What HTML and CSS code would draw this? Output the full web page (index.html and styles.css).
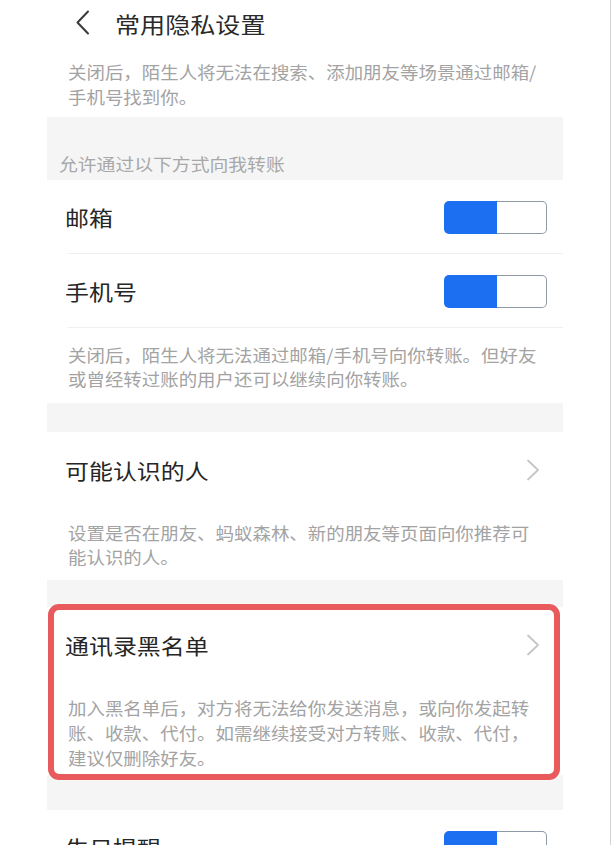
FILE: index.html
```html
<!DOCTYPE html>
<html lang="zh-CN">
<head>
<meta charset="utf-8">
<title>常用隐私设置</title>
<link rel="stylesheet" href="styles.css">
</head>
<body>
<div class="page">
  <div class="screen">
    <header class="header">
      <svg class="back" width="15" height="25" viewBox="0 0 15 25"><path d="M13 1.5 L2.5 12.5 L13 23.5" fill="none" stroke="#3a3a3a" stroke-width="2" stroke-linecap="round" stroke-linejoin="round"/></svg>
      <h1 class="title"><span class="wide">常用隐私设置</span></h1>
    </header>

    <p class="desc desc-top"><span class="wide-s">关闭后，陌生人将无法在搜索、添加朋友等场景通过邮箱/<br>手机号找到你。</span></p>

    <div class="group-label"><span class="wide">允许通过以下方式向我转账</span></div>

    <div class="row row-line">
      <span class="row-title wide">邮箱</span>
      <span class="toggle"><span class="toggle-on"></span><span class="toggle-off"></span></span>
    </div>
    <div class="row row-line">
      <span class="row-title wide">手机号</span>
      <span class="toggle"><span class="toggle-on"></span><span class="toggle-off"></span></span>
    </div>
    <p class="desc desc-pay"><span class="wide-s">关闭后，陌生人将无法通过邮箱/手机号向你转账。但好友<br>或曾经转过账的用户还可以继续向你转账。</span></p>

    <div class="gap gap-a"></div>

    <div class="row row-tall">
      <span class="row-title wide">可能认识的人</span>
      <svg class="chev" width="14" height="22" viewBox="0 0 14 22"><path d="M2 1.5 L12 11 L2 20.5" fill="none" stroke="#c6c6c6" stroke-width="1.8" stroke-linecap="round" stroke-linejoin="round"/></svg>
    </div>
    <p class="desc desc-know"><span class="wide-s">设置是否在朋友、蚂蚁森林、新的朋友等页面向你推荐可<br>能认识的人。</span></p>

    <div class="gap gap-b"></div>

    <div class="highlight">
      <div class="row row-tall">
        <span class="row-title wide">通讯录黑名单</span>
        <svg class="chev" width="14" height="22" viewBox="0 0 14 22"><path d="M2 1.5 L12 11 L2 20.5" fill="none" stroke="#c6c6c6" stroke-width="1.8" stroke-linecap="round" stroke-linejoin="round"/></svg>
      </div>
      <p class="desc desc-black"><span class="wide-s">加入黑名单后，对方将无法给你发送消息，或向你发起转<br>账、收款、代付。如需继续接受对方转账、收款、代付，<br>建议仅删除好友。</span></p>
    </div>

    <div class="gap gap-c"></div>

    <div class="row row-birth">
      <span class="row-title wide">生日提醒</span>
      <span class="toggle"><span class="toggle-on"></span><span class="toggle-off"></span></span>
    </div>
  </div>
</div>
</body>
</html>
```

FILE: styles.css
```css
html, body {
  margin: 0;
  padding: 0;
  height: 845px;
  overflow: hidden;
  background: #ffffff;
}

.page {
  width: 610px;
  height: 845px;
  border-right: 1px solid #d4d4d4;
  overflow: hidden;
  font-family: "Noto Sans CJK SC", "Noto Sans", sans-serif;
}

.screen {
  margin-left: 47px;
  width: 516px;
}

.wide {
  display: inline-block;
  transform: scaleX(1.14);
  transform-origin: left center;
}

.wide-s {
  display: inline-block;
  transform: scaleX(1.085);
  transform-origin: left center;
}

.header {
  height: 45px;
  display: flex;
  align-items: center;
  padding-left: 28px;
}

.back {
  display: block;
  flex: none;
}

.title {
  margin: 0 0 0 25px;
  font-size: 22px;
  font-weight: 400;
  color: #2a2a2a;
  line-height: 30px;
}

.desc {
  margin: 0;
  padding-left: 21px;
  padding-right: 6px;
  font-size: 17px;
  line-height: 25px;
  color: #a3a3a3;
  white-space: nowrap;
}

.desc-top {
  padding-top: 14px;
  padding-bottom: 8px;
}

.desc-pay {
  padding-top: 15px;
  padding-bottom: 12px;
  line-height: 24px;
}

.desc-know {
  padding-top: 13px;
  padding-bottom: 11px;
  line-height: 24px;
}

.desc-black {
  padding-top: 12px;
  padding-bottom: 5px;
}

.group-label {
  height: 63px;
  box-sizing: border-box;
  background: #f5f5f5;
  display: flex;
  align-items: flex-end;
  padding: 0 12px 3px;
  font-size: 16.5px;
  line-height: 25px;
  color: #a8a8a8;
}

.gap {
  background: #f5f5f5;
}

.gap-a { height: 29px; }
.gap-b { height: 27px; }
.gap-c { height: 35px; }

.row {
  height: 74px;
  box-sizing: border-box;
  display: flex;
  align-items: center;
  justify-content: space-between;
  padding: 0 16px 0 18px;
}

.row-line {
  background: linear-gradient(#efefef, #efefef) no-repeat 21px 100% / calc(100% - 21px) 1px;
}

.row-tall {
  height: 76px;
  padding-right: 23px;
}

.row-birth {
  height: 74px;
}

.row-title {
  font-size: 21px;
  color: #262626;
  line-height: 30px;
}

.chev {
  display: block;
  flex: none;
}

.toggle {
  display: flex;
  width: 103px;
  height: 33px;
  flex: none;
}

.toggle-on {
  width: 53px;
  background: #1b6ff0;
  border-radius: 5px 0 0 5px;
}

.toggle-off {
  flex: 1;
  box-sizing: border-box;
  border: 1.5px solid #8f99a8;
  border-left: none;
  border-radius: 0 5px 5px 0;
  background: #ffffff;
}

.highlight {
  position: relative;
}

.highlight::after {
  content: "";
  position: absolute;
  top: -3px;
  bottom: -5px;
  left: 1px;
  right: 3px;
  border: 6px solid #e85a5b;
  border-radius: 11px;
  pointer-events: none;
}
```
